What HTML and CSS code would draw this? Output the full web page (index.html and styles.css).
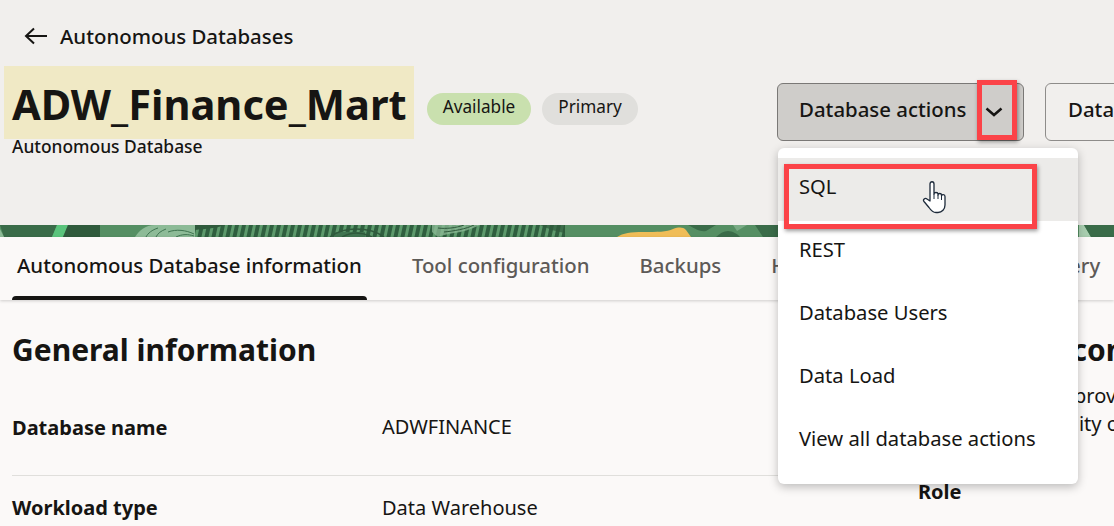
FILE: index.html
```html
<!DOCTYPE html>
<html lang="en">
<head>
    <meta charset="UTF-8">
    <meta name="viewport" content="width=device-width, initial-scale=1.0">
    <title>ADW_Finance_Mart</title>
    <link rel="stylesheet" href="styles.css">
</head>
<body>
    <header class="page-header">
        <a class="back-link">
            <svg class="back-icon" width="24" height="18" viewBox="0 0 24 18"><path d="M23 9H2M10 1.500 2 9l8 7.500" fill="none" stroke="#161513" stroke-width="2"/></svg>
            <span>Autonomous Databases</span>
        </a>
        <div class="title-row">
            <div class="title-block">
                <h1 class="title">ADW_Finance_Mart</h1>
                <div class="subtitle">Autonomous Database</div>
            </div>
            <span class="badge badge-green">Available</span>
            <span class="badge badge-gray">Primary</span>
            <div class="header-actions">
                <div class="split-button">
                    <span class="split-label">Database actions</span>
                    <span class="split-arrow">
                        <svg width="18" height="10" viewBox="0 0 18 10"><path d="M1.500 1.500 9 8l7.500-6.500" fill="none" stroke="#161513" stroke-width="2.500"/></svg>
                    </span>
                </div>
                <div class="outline-button">Database connection</div>
            </div>
        </div>
    </header>

    <div class="banner">
        <svg width="1114" height="12" viewBox="0 0 1114 12">
            <defs>
                <pattern id="ridges" width="7" height="12" patternUnits="userSpaceOnUse" patternTransform="skewX(-12)">
                    <rect width="7" height="12" fill="#2f5f3f"/>
                    <rect x="1" width="3" height="12" fill="#5d9a6c"/>
                </pattern>
            </defs>
            <rect width="1114" height="12" fill="#558f63"/>
            <path d="M0 0h57l-5 12H4z" fill="#3a6c49"/>
            <path d="M0 4l4 8H0z" fill="#8dbb97"/>
            <path d="M57 0h11l-5 12H52z" fill="#5ac47c"/>
            <path d="M68 0h32v12H63z" fill="#2f5a3c"/>
            <path d="M135 12c4-6 10-12 20-12h40v12z" fill="#8dbb97"/>
            <g fill="none" stroke="#3f7450">
                <path d="M146 12c2-4 6-7 12-9M156 12c2-4 5-6 10-8M168 7c8-3 18-2 26 2M176 12c6-3 12-3 18-1"/>
            </g>
            <rect x="195" width="370" height="12" fill="url(#ridges)"/>
            <path d="M195 0h30c-8 3-20 4-30 5z" fill="#2f5a3c"/>
            <g fill="none" stroke="#2f5a3c" stroke-width="1.500">
                <rect x="335" y="7" width="30" height="5" fill="#3f7450" stroke="none"/>
                <path d="M330 12c8-6 18-8 26-8s20 2 28 8M342 12c6-3 10-4 14-4s10 1 16 4"/>
            </g>
            <path d="M432 0h48c-8 4-18 7-26 8-6 1-12 2-16 4l-6-5z" fill="#8dbb97" opacity=".75"/>
            <g fill="none" stroke="#2f5a3c">
                <path d="M438 3c8 1 18 0 26-3M444 7c10-1 22-3 30-7"/>
            </g>
            <path d="M480 0h60c6 3 14 6 25 8V0z" fill="#2f5a3c" opacity=".7"/>
            <path d="M617 12c6-4 14-5 26-5 14 0 24 0 30-3 6-2 10-2 13 1l5 7z" fill="#f0bd57"/>
            <path d="M688 0h28l-10 6c-6 1-10-2-18-6zM716 12c4-4 8-6 12-6s10 3 12 6z" fill="#3a6c49"/>
            <path d="M733 0h14l-10 6z" fill="#79ab85"/>
            <path d="M755 0h45v12h-37z" fill="#3a6c49"/>
            <path d="M1079 0h5l7 12h-12z" fill="#a9cfb0"/>
            <path d="M1084 0h30v12h-23z" fill="#3a6c49"/>
        </svg>
    </div>

    <nav class="tabs">
        <a class="tab tab-active">Autonomous Database information</a>
        <a class="tab">Tool configuration</a>
        <a class="tab">Backups</a>
        <a class="tab tab-history">History</a>
        <a class="tab">Query</a>
    </nav>

    <main class="content">
        <section class="main-col">
            <h2 class="section-title">General information</h2>
            <div class="info-rows">
                <div class="info-row">
                    <div class="info-label">Database name</div>
                    <div class="info-value">ADWFINANCE</div>
                </div>
                <div class="info-row">
                    <div class="info-label">Workload type</div>
                    <div class="info-value">Data Warehouse</div>
                </div>
            </div>
        </section>
        <section class="side-col">
            <h2 class="section-title side-title">Database connection</h2>
            <p class="side-text">You can quickly provision<br>and the availability of data</p>
            <div class="info-label side-role">Role</div>
        </section>
    </main>

    <ul class="menu">
        <li class="menu-item menu-item-hover">SQL</li>
        <li class="menu-item">REST</li>
        <li class="menu-item">Database Users</li>
        <li class="menu-item">Data Load</li>
        <li class="menu-item">View all database actions</li>
    </ul>

    <div class="callout callout-arrow"></div>
    <div class="callout callout-sql"></div>

    <svg class="hand" width="26" height="34" viewBox="0 0 26 34">
        <path d="M8 21V4c0-3 4-3 4 0v10c0-2 4-2 4 0v1c0-2 3.500-2 3.500 0v1c0-2 3.500-2 3.500 .5V25c0 4-3 7.500-7 7.500h-2c-3 0-5-2-7-5l-5-6c-1.500-2 1-4 3-2.500z" fill="#fff" stroke="#1d2a3a" stroke-width="1.300" stroke-linejoin="round"/>
        <path d="M12 14v5M16 15v4M19.500 16v4" fill="none" stroke="#1d2a3a" stroke-width="1"/>
    </svg>
</body>
</html>
```
FILE: styles.css
```css
html, body {
    margin: 0;
    height: 526px;
    overflow: hidden;
}
body {
    position: relative;
    background-color: #fbf9f8;
    color: #161513;
    font-family: "Noto Sans", Arial, sans-serif;
}

/* header */
.page-header {
    height: 225px;
    box-sizing: border-box;
    padding: 23px 0 0 4px;
    background-color: #f1efed;
    overflow: hidden;
}
.back-link {
    display: flex;
    align-items: center;
    gap: 12px;
    margin-left: 20px;
    height: 26px;
    font-size: 20.4px;
    font-weight: 500;
}
.title-row {
    display: flex;
    align-items: flex-start;
    margin-top: 17px;
}
.title-block {
    width: 410px;
    flex: none;
}
.title {
    margin: 0;
    padding-left: 8px;
    height: 73px;
    line-height: 76px;
    font-size: 41.6px;
    font-weight: 700;
    background-color: #f0e9c5;
    white-space: nowrap;
}
.subtitle {
    padding-left: 8px;
    font-size: 17.4px;
    font-weight: 500;
    line-height: 14px;
}
.badge {
    flex: none;
    margin-top: 27px;
    height: 32px;
    line-height: 28px;
    border-radius: 16px;
    font-size: 17.2px;
    box-sizing: border-box;
    text-align: center;
}
.badge-green {
    width: 104px;
    margin-left: 13px;
    background-color: #c9e0ae;
}
.badge-gray {
    width: 96px;
    margin-left: 11px;
    background-color: #e0dfdc;
}
.header-actions {
    display: flex;
    gap: 21px;
    margin-left: 139px;
    margin-top: 17px;
    flex: none;
}
.split-button {
    display: flex;
    width: 247px;
    height: 58px;
    box-sizing: border-box;
    border: 1px solid #7a7876;
    border-radius: 6px;
    background-color: #cfcdca;
    font-size: 20.4px;
    font-weight: 500;
}
.split-label {
    padding-left: 21px;
    line-height: 50px;
    white-space: nowrap;
}
.split-arrow {
    display: flex;
    align-items: center;
    margin-left: auto;
    padding-right: 20px;
}
.outline-button {
    height: 58px;
    box-sizing: border-box;
    padding-left: 22px;
    width: 240px;
    border: 1px solid #8e8c8a;
    border-radius: 6px;
    line-height: 50px;
    font-size: 20.4px;
    font-weight: 500;
    white-space: nowrap;
}

/* banner strip */
.banner {
    height: 12px;
    overflow: hidden;
}
.banner svg {
    display: block;
}

/* tabs */
.tabs {
    display: flex;
    height: 63px;
    padding-left: 12px;
    gap: 40px;
    background-color: #fbf9f8;
    box-shadow: 0 1px 3px rgba(0, 0, 0, .18);
    position: relative;
    font-size: 20.4px;
    font-weight: 500;
    color: #5d5a57;
    white-space: nowrap;
}
.tab {
    position: relative;
    padding: 0 5px;
    line-height: 56px;
    height: 63px;
    box-sizing: border-box;
}
.tab-active {
    color: #161513;
}
.tab-active::after {
    content: "";
    position: absolute;
    left: 0;
    right: 0;
    bottom: 0;
    height: 4px;
    background-color: #161513;
    border-radius: 4px 4px 0 0;
}
.tab-history {
    width: 229px;
}

/* content */
.content {
    display: flex;
    height: 226px;
    box-sizing: border-box;
    padding: 30px 0 0 12px;
    overflow: hidden;
}
.main-col {
    width: 788px;
    flex: none;
}
.side-col {
    margin-left: 118px;
    width: 196px;
    flex: none;
    white-space: nowrap;
}
.section-title {
    margin: 0;
    font-size: 30px;
    font-weight: 700;
    line-height: 40px;
    white-space: nowrap;
}
.side-title {
    padding-left: 5px;
}
.info-rows {
    margin-top: 25px;
}
.info-row {
    display: flex;
    height: 81px;
    box-sizing: border-box;
    padding-top: 19px;
    font-size: 20px;
    line-height: 28px;
    border-bottom: 1px solid #e0dfdc;
}
.info-row + .info-row {
    padding-top: 18px;
}
.info-label {
    width: 370px;
    font-weight: 700;
}
.info-value {
    margin-top: -1px;
}
.info-row + .info-row .info-value {
    margin-top: 0;
}
.side-text {
    margin: 12px 0 0;
    padding-left: 7px;
    font-size: 20px;
    line-height: 28px;
}
.side-role {
    margin-top: 40px;
    font-size: 20px;
    line-height: 28px;
}

/* dropdown */
.menu {
    position: absolute;
    left: 778px;
    top: 148px;
    width: 300px;
    height: 336px;
    margin: 0;
    padding: 10px 0 0;
    box-sizing: border-box;
    list-style: none;
    background-color: #fff;
    border-radius: 6px;
    box-shadow: 0 3px 10px rgba(0, 0, 0, .25);
}
.menu-item {
    height: 63px;
    box-sizing: border-box;
    padding: 14px 0 0 21px;
    font-size: 20.2px;
    line-height: 28px;
    color: #161513;
}
.menu-item-hover {
    background-color: #ecebe9;
}

/* red tutorial callouts */
.callout {
    position: absolute;
    box-sizing: border-box;
    border: 5px solid #fb4348;
    box-shadow: 1px 2px 4px rgba(0, 0, 0, .4);
}
.callout-arrow {
    left: 977px;
    top: 80px;
    width: 40px;
    height: 60px;
}
.callout-sql {
    left: 784px;
    top: 164px;
    width: 253px;
    height: 65px;
}
.hand {
    position: absolute;
    left: 922px;
    top: 180px;
}
```
